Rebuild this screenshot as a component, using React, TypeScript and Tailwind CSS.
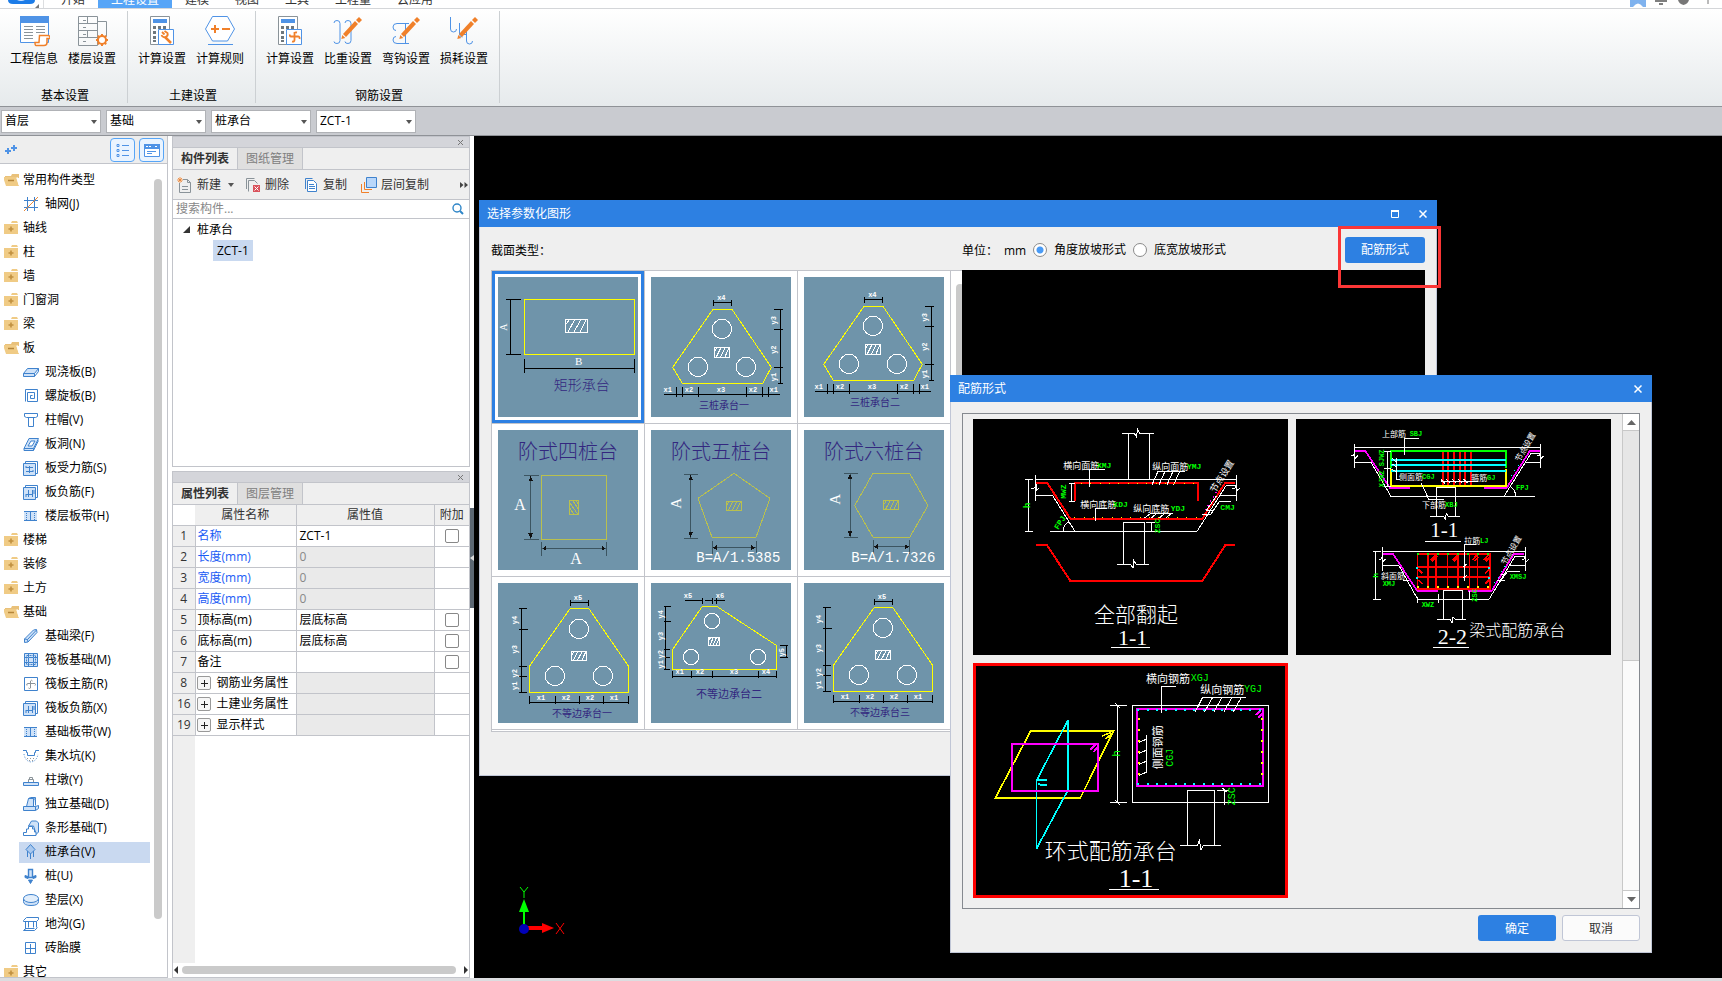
import React, { useState } from "react";

type Kids = { children?: React.ReactNode };

const FONT = "font-['Open_Sans','Noto_Sans_CJK_SC',sans-serif]";

/* ---------- drawing helpers ---------- */

function P({ d, c = "#fff", w = 3, f = "none", dash }: { d: string; c?: string; w?: number; f?: string; dash?: string }) {
  return <path d={d} stroke={c} strokeWidth={w} fill={f} strokeDasharray={dash} />;
}

type TProps = Kids & { x: number; y: number; s: number; c?: string; r?: number; a?: "start" | "middle" | "end"; f?: "mono" | "serif" | "cjk"; b?: boolean };

function T({ x, y, s, c = "#fff", r, a = "middle", f = "cjk", b, children }: TProps) {
  const family =
    f === "mono" ? '"Liberation Mono",monospace' : f === "serif" ? '"Liberation Serif",serif' : '"Noto Sans CJK SC",sans-serif';
  return (
    <text
      x={x}
      y={y}
      fill={c}
      fontSize={s}
      fontFamily={family}
      fontWeight={b ? 700 : s >= 42 ? 300 : 400}
      textAnchor={a}
      dominantBaseline="central"
      transform={r ? `rotate(${r} ${x} ${y})` : undefined}
    >
      {children}
    </text>
  );
}

function Hatch({ x, y, w, h, c = "#fff" }: { x: number; y: number; w: number; h: number; c?: string }) {
  const q = w / 4;
  return (
    <P
      c={c}
      d={`M${x} ${y}h${w}v${h}h${-w}zM${x} ${y + h / 2}l${q * 0.8} ${-h / 2}M${x + q * 0.5} ${y + h}l${q * 1.3} ${-h}M${x + q * 1.6} ${y + h}l${q * 1.3} ${-h}M${x + q * 2.7} ${y + h}l${q * 1.2} ${-h}`}
    />
  );
}

const INK = "#33277f";
const OLIVE = "#b9c04e";

function Thumb({ vb, label, children }: Kids & { vb: string; label: string }) {
  return (
    <svg viewBox={vb} className="block size-[140px] bg-[#6f94aa]" shapeRendering="crispEdges" role="img" aria-label={label}>
      {children}
    </svg>
  );
}

function Small({ items }: { items: [string, number, number, number?][] }) {
  return (
    <>
      {items.map(([t, x, y, r], i) => (
        <T key={i} x={x} y={y} s={21} f="mono" b r={r}>
          {t}
        </T>
      ))}
    </>
  );
}

function Circles({ at, r = 29 }: { at: [number, number][]; r?: number }) {
  return (
    <>
      {at.map(([x, y], i) => (
        <circle key={i} cx={x} cy={y} r={r} fill="none" stroke="#fff" strokeWidth={3} />
      ))}
    </>
  );
}

function ThreePile({ title }: { title: string }) {
  return (
    <>
      <P c="#ff0" d="M705 343H762L880 517L854 565H613L584 517Z" />
      <Circles at={[[732, 402], [660, 516], [804, 516]]} />
      <Hatch x={708} y={457} w={47} h={31} />
      <P c="#000" d="M706 323H761M706 315V332M761 315V332M908 343V565M888 343H914M888 404H914M888 517H914M900 565H914M558 598H906M595 576V606M613 576V606M661 576V606M805 576V606M854 576V606M871 576V606" />
      <Small items={[["x4", 730, 309], ["y3", 888, 376, -90], ["y2", 888, 464, -90], ["y1", 888, 546, -90], ["x1", 569, 584], ["x2", 633, 584], ["x3", 729, 584], ["x2", 825, 584], ["x1", 887, 584]]} />
      <T x={738} y={628} s={30} c={INK}>{title}</T>
    </>
  );
}

function Unequal({ title, tx }: { title: string; tx: number }) {
  return (
    <>
      <P c="#ff0" d="M277 565H332L452 739V817H154V739Z" />
      <Circles at={[[303, 627], [231, 768], [375, 768]]} />
      <Hatch x={280} y={693} w={46} h={28} />
      <P c="#000" d="M277 548H332M277 540V557M332 540V557M130 565V817M123 565H147M123 628H150M123 739H147M123 769H147M123 817H147M154 847H452M154 828V852M232 828V852M304 828V852M376 828V852M452 828V852" />
      <Small items={[["x5", 300, 533], ["y4", 110, 600, -90], ["y3", 110, 688, -90], ["y2", 110, 760, -90], ["y1", 110, 797, -90], ["x1", 189, 833], ["x2", 264, 833], ["x2", 336, 833], ["x1", 408, 833]]} />
      <T x={tx} y={877} s={30} c={INK}>{title}</T>
    </>
  );
}

const ARROW_L = "l12 -7v14z";
const ARROW_R = "l-12 -7v14z";
const ARROW_U = "l-7 16h14z";
const ARROW_D = "l-7 -16h14z";

const thumbs: { name: string; art: React.ReactNode }[] = [
  {
    name: "矩形承台",
    art: (
      <Thumb vb="60 246 420 420" label="矩形承台">
        <P c="#ff0" d="M139 313H470V478H139Z" />
        <Hatch x={261} y={373} w={66} h={39} />
        <P c="#000" d="M97 313V478M84 313H129M84 478H129M139 520H470M139 492V533M470 492V533" />
        <T x={302} y={498} s={33} f="serif">B</T>
        <T x={76} y={396} s={30} f="serif" r={-90}>A</T>
        <T x={311} y={568} s={42} c={INK}>矩形承台</T>
      </Thumb>
    ),
  },
  { name: "三桩承台一", art: <Thumb vb="519 246 420 420" label="三桩承台一"><ThreePile title="三桩承台一" /></Thumb> },
  {
    name: "三桩承台二",
    art: (
      <Thumb vb="519 246 420 420" label="三桩承台二">
        <g transform="translate(-6 -9)"><ThreePile title="三桩承台二" /></g>
      </Thumb>
    ),
  },
  {
    name: "阶式四桩台",
    art: (
      <Thumb vb="60 30 420 420" label="阶式四桩台">
        <T x={270} y={92} s={60} c={INK}>阶式四桩台</T>
        <P c={OLIVE} d="M191 166H385V358H191Z" />
        <P c={OLIVE} d="M274 241H302V284H274ZM274 262L288 284M274 246L300 284M284 241L302 268M294 241L302 254" />
        <P c="#3c5561" d="M158 166V358M139 166H182M139 358H182M191 385H385M191 367V409M385 367V409" />
        <path fill="#111" d={`M158 168${ARROW_U}M158 356${ARROW_D}M193 385${ARROW_L}M383 385${ARROW_R}`} />
        <T x={126} y={254} s={48} f="serif">A</T>
        <T x={294} y={416} s={48} f="serif">A</T>
      </Thumb>
    ),
  },
  {
    name: "阶式五桩台",
    art: (
      <Thumb vb="519 30 420 420" label="阶式五桩台">
        <T x={729} y={92} s={60} c={INK}>阶式五桩台</T>
        <P c={OLIVE} d="M768 160L876 235L834 352H702L660 235Z" />
        <Hatch x={745} y={243} w={45} h={28} c={OLIVE} />
        <P c="#3c5561" d="M638 163V354M618 163H661M618 354H661M702 383H834M702 362V404M834 362V404" />
        <path fill="#111" d={`M638 165${ARROW_U}M638 352${ARROW_D}M704 383${ARROW_L}M832 383${ARROW_R}`} />
        <T x={594} y={250} s={45} f="serif" r={-90}>A</T>
        <T x={907} y={415} s={42} f="mono" a="end">B=A/1.5385</T>
      </Thumb>
    ),
  },
  {
    name: "阶式六桩台",
    art: (
      <Thumb vb="978 30 420 420" label="阶式六桩台">
        <T x={1188} y={92} s={60} c={INK}>阶式六桩台</T>
        <P c={OLIVE} d="M1185 160H1295L1350 257L1295 352H1185L1130 257Z" />
        <Hatch x={1217} y={241} w={45} h={27} c={OLIVE} />
        <P c="#3c5561" d="M1116 160V352M1097 160H1140M1097 352H1140M1185 380H1295M1185 361V403M1295 361V403" />
        <path fill="#111" d={`M1116 162${ARROW_U}M1116 350${ARROW_D}M1187 380${ARROW_L}M1293 380${ARROW_R}`} />
        <T x={1070} y={238} s={45} f="serif" r={-90}>A</T>
        <T x={1372} y={415} s={42} f="mono" a="end">B=A/1.7326</T>
      </Thumb>
    ),
  },
  { name: "不等边承台一", art: <Thumb vb="60 489 420 420" label="不等边承台一"><Unequal title="不等边承台一" tx={312} /></Thumb> },
  {
    name: "不等边承台二",
    art: (
      <Thumb vb="519 489 420 420" label="不等边承台二">
        <P c="#ff0" d="M673 559H716L895 676V748H584V688Z" />
        <Circles r={23} at={[[702, 603], [639, 711], [840, 711]]} />
        <Hatch x={691} y={652} w={34} h={25} />
        <P c="#000" d="M621 541H675M680 541H703M708 541H741M673 533V551M703 533V551M716 533V551M562 559V748M557 559H579M557 604H579M557 688H575M557 712H575M557 748H575M584 769H895M584 752V773M640 752V773M703 752V773M841 752V773M895 752V773M925 676V712M906 676H930M906 712H930" />
        <Small items={[["x5", 630, 528], ["x6", 726, 528], ["y4", 549, 583, -90], ["y3", 549, 648, -90], ["y2", 549, 703, -90], ["y1", 549, 733, -90], ["x1", 605, 757], ["x2", 666, 757], ["x3", 768, 757], ["x4", 864, 757], ["y5", 911, 697, -90]]} />
        <T x={753} y={819} s={33} c={INK}>不等边承台二</T>
      </Thumb>
    ),
  },
  {
    name: "不等边承台三",
    art: (
      <Thumb vb="60 489 420 420" label="不等边承台三">
        <g transform="translate(-6 -3)"><Unequal title="不等边承台三" tx={294} /></g>
      </Thumb>
    ),
  },
];

const GREEN = "#0f0";
const CYAN = "#0ff";
const MAG = "#f0f";

function FlipUpSection() {
  return (
    <svg viewBox="69 57 945 708" className="block h-[236px] w-[315px] bg-black" shapeRendering="crispEdges" role="img" aria-label="全部翻起">
      <P w={6} c="#f00" d="M258 248H291L361 356H757L826 248H855M375 302V248H745V302M258 435H291L361 543H757L826 435H855" />
      <P d="M516 100H553L559 110L563 88L569 100H612M535 100V238M599 100V238M257 238H860M257 225V302M257 287H308L375 394M244 265H252L258 256V272L267 265M301 394H741L828 257H860M808 287H860M860 225V302M846 265H854L860 256V272L869 265M236 238V394M226 238H248M226 394H248" />
      <P d="M418 260V208H466M606 254L624 214H706M627 254L645 214M651 254L669 214M671 254L689 214M365 250V304M356 250H374M356 304H374M436 362V325H470M584 354L602 340H668M604 354L620 340M628 354L644 340M648 354L664 340M520 492V367H584V492M501 493H542L549 504L551 480L558 493H597M604 367V394M588 367H614M340 392Q340 374 357 366M843 304H808L782 344M757 344H782M768 330H790M800 287L770 330" />
      <P c="#ff0" dash="3 25" d="M393 250H740M373 353H745" />
      <P c={MAG} dash="3 12" d="M765 330L800 275" w={4} />
      <T x={340} y={196} s={27} a="start">横向面筋</T>
      <T x={441} y={197} s={24} a="start" f="mono" b c={GREEN}>XMJ</T>
      <T x={607} y={198} s={27} a="start">纵向面筋</T>
      <T x={711} y={199} s={24} a="start" f="mono" b c={GREEN}>YMJ</T>
      <T x={391} y={312} s={27} a="start">横向底筋</T>
      <T x={490} y={314} s={24} a="start" f="mono" b c={GREEN}>XDJ</T>
      <T x={550} y={324} s={27} a="start">纵向底筋</T>
      <T x={662} y={325} s={24} a="start" f="mono" b c={GREEN}>YDJ</T>
      <T x={811} y={322} s={24} a="start" f="mono" b c={GREEN}>CMJ</T>
      <T x={342} y={275} s={24} r={-90} f="mono" b c={GREEN}>MWZ</T>
      <T x={621} y={378} s={24} r={-90} f="mono" b c={GREEN}>ZSC</T>
      <T x={330} y={368} s={24} r={-58} f="mono" b c={GREEN}>FPJ</T>
      <T x={235} y={316} s={27} r={-90} f="mono" b c={GREEN}>h</T>
      <T x={815} y={228} s={27} r={-58}>节点设置</T>
      <T x={558} y={638} s={63}>全部翻起</T>
      <T x={548} y={711} s={66} f="serif">1-1</T>
      <P d="M483 742H600" />
    </svg>
  );
}

function BeamSection() {
  return (
    <svg viewBox="33 57 945 708" className="block h-[236px] w-[315px] bg-black" shapeRendering="crispEdges" role="img" aria-label="梁式配筋承台">
      <P d="M209 142H767M209 132V205M767 132V205M209 187H258L318 289H750M657 289L738 160H767M724 187H767M198 167H204L209 158V176L218 167M756 167H762L767 158V176L778 167" />
      <P w={5} c={MAG} d="M209 152H240L315 264H375M764 152H735L665 264H598" />
      <P w={5} c="#f00" d="M474 154V258M489 154V258M507 154V258M525 154V258M540 154V258M558 154V258" />
      <P w={5} c={GREEN} d="M318 205V153H663V205" />
      <P w={5} c="#ff0" d="M318 207V258H663V207" />
      <P w={5} c={CYAN} d="M318 180H663M318 195H663M318 213H663" />
      <P c={CYAN} dash="3 16" d="M678 228L720 165" w={4} />
      <P d="M359 165V115H402M334 175V238H345M322 175L334 187M322 192L334 200M322 208L334 216M468 244H580M468 238L480 250M484 238L496 250M502 238L514 250M520 238L532 250M536 238L548 250M409 250L431 297H476M308 154V260M298 154H318M298 206H318M298 260H318M455 348V262H512V348M435 349H475L481 358L484 340L490 349H525M675 258Q692 270 692 289" />
      <T x={291} y={101} s={24} a="start">上部筋</T>
      <T x={374} y={102} s={21} a="start" f="mono" b c={GREEN}>SBJ</T>
      <T x={342} y={230} s={24} a="start">侧面筋</T>
      <T x={411} y={231} s={21} a="start" f="mono" b c={GREEN}>CGJ</T>
      <T x={559} y={232} s={24} a="start">箍筋</T>
      <T x={606} y={234} s={21} a="start" f="mono" b c={GREEN}>GJ</T>
      <T x={411} y={314} s={24} a="start">下部筋</T>
      <T x={480} y={315} s={21} a="start" f="mono" b c={GREEN}>XBJ</T>
      <T x={693} y={264} s={21} a="start" f="mono" b c={GREEN}>FPJ</T>
      <T x={290} y={205} s={21} r={-90} f="mono" b c={GREEN}>XJWZ SJWZ</T>
      <T x={719} y={140} s={24} r={-60}>节点设置</T>
      <T x={478} y={391} s={63} f="serif">1-1</T>
      <P d="M420 424H528" />

      <P d="M293 454H722M293 441V514M722 441V514M293 497H342L398 598H612L690 469H722M676 497H722M282 477H288L293 468V486L302 477M711 477H717L722 468V486L732 477M272 454V598M263 454H288M263 598H288" />
      <P w={5} c={MAG} d="M293 462H324L397 573H459M718 462H686L620 573H549" />
      <P w={5} c="#f00" d="M397 462H614V567H397ZM428 462V567M452 462V567M487 462V567M518 462V567M553 462V567M577 462V567M397 501H614M397 531H614" />
      <P w={5} c="#f00" d="M436 480L452 464M440 484L456 468M502 480L518 464M506 484L516 474M562 480L577 464M568 484L580 472M597 480L612 464M602 484L612 474M400 508L412 520M400 540L412 552M600 520L612 508M600 552L612 540" />
      <P w={6} c={GREEN} dash="6 24" d="M395 463H616" />
      <P w={6} c="#ff0" dash="6 24" d="M395 562H616" />
      <P w={6} c={CYAN} dash="6 24" d="M397 500V540M612 500V540" />
      <P c={CYAN} dash="3 16" d="M628 548L666 490" w={4} />
      <P d="M539 542V433H573M534 500L546 492M534 534L546 526M355 540H372M397 598H461M397 590V608M461 582V608M554 572V598M476 657V572H533V657M456 658H495L501 668L504 650L510 658H543M705 514H668L640 552M635 540H660M648 524H664" />
      <T x={538} y={422} s={24} a="start">拉筋</T>
      <T x={585} y={423} s={21} a="start" f="mono" b c={GREEN}>LJ</T>
      <T x={288} y={527} s={24} a="start">斜面筋</T>
      <T x={293} y={551} s={21} a="start" f="mono" b c={GREEN}>XMJ</T>
      <T x={674} y={530} s={21} a="start" f="mono" b c={GREEN}>XMSJ</T>
      <T x={410} y={614} s={21} a="start" f="mono" b c={GREEN}>XWZ</T>
      <T x={569} y={586} s={21} r={-90} f="mono" b c={GREEN}>ZSC</T>
      <T x={271} y={526} s={24} r={-90} f="mono" b c={GREEN}>h</T>
      <T x={677} y={450} s={24} r={-60}>节点设置</T>
      <T x={502} y={710} s={66} f="serif">2-2</T>
      <P d="M444 742H552" />
      <T x={553} y={687} s={48} a="start">梁式配筋承台</T>
    </svg>
  );
}

function RingSection() {
  return (
    <svg viewBox="78 33 927 687" className="block h-[229px] w-[309px] bg-black" shapeRendering="crispEdges" role="img" aria-label="环式配筋承台">
      <P w={5} c="#ff0" d="M242 228H490L391 429H136ZM456 243L484 232M466 252L486 236" />
      <P w={5} c={CYAN} d="M354 195V405L259 582V378ZM259 375H291M264 386L270 389H291" />
      <P w={6} c={MAG} d="M186 266H445V408H186ZM421 284L436 268M430 292L444 276" />
      <P d="M547 151H956V442H547Z" />
      <P w={6} c={MAG} d="M561 162H940V393H561ZM916 180L934 166M926 188L940 172" />
      <P w={6} c={CYAN} dash="6 22" d="M562 166H938M562 388H938" />
      <P w={6} c="#ff0" dash="6 27" d="M566 190V370M935 190V370" />
      <P d="M634 173V94H678M736 170L758 127H888M764 170L788 127M792 170L816 127M822 170L846 127M850 170L874 127M502 151V442M480 151H530M480 442H530M494 143L510 159M494 434L510 450M590 240V351M568 262L590 252M568 295L590 285M568 328L590 318M568 361L590 351M713 571V406H794V571M691 571H742L748 556L753 586L760 571H813M824 406V450M801 406H838M818 400L830 412" />
      <T x={588} y={69} s={33} a="start">横向钢筋</T>
      <T x={722} y={71} s={30} a="start" f="mono" c={GREEN}>XGJ</T>
      <T x={751} y={102} s={33} a="start">纵向钢筋</T>
      <T x={882} y={104} s={30} a="start" f="mono" c={GREEN}>YGJ</T>
      <T x={502} y={295} s={33} r={-90} f="mono" c={GREEN}>h</T>
      <T x={620} y={277} s={33} r={-90}>侧面钢筋</T>
      <T x={663} y={308} s={30} r={-90} f="mono" c={GREEN}>CGJ</T>
      <T x={849} y={424} s={30} r={-90} f="mono" c={GREEN}>ZSC</T>
      <T x={284} y={583} s={66} a="start">环式配筋承台</T>
      <T x={558} y={671} s={78} f="serif">1-1</T>
      <P d="M477 703H627" />
    </svg>
  );
}

/* ---------- ribbon ---------- */

const B = "#4f93e6";
const G = "#8a9399";
const O = "#f0802a";

function RibbonSvg({ children }: Kids) {
  return (
    <svg viewBox="0 0 32 32" className="block size-8" fill="none" aria-hidden="true">
      {children}
    </svg>
  );
}

function CalcBase() {
  return (
    <>
      <path d="M4.500 1.500h19v28h-19z" stroke={G} fill="#fff" />
      <path d="M7 4h14v4H7z" fill={B} />
      <path d="M7 11h3v3H7zM12 11h3v3h-3zM17 11h3v3h-3zM7 16h3v3H7zM12 16h3v3h-3zM7 21h3v3H7zM7 25h3v2H7z" fill="#6e777d" />
      <path d="M12.500 14.500h15v15h-15z" stroke={B} fill="#fff" />
    </>
  );
}

function Pencil() {
  return (
    <>
      <path d="M11 19l12-13 3 3-12 13z" fill={O} />
      <path d="M24 5l3-3 3 3-3 3z" fill={O} />
      <path d="M10.300 20l3 3-4 1z" fill={O} />
    </>
  );
}

const ribbonIcons: Record<string, React.ReactNode> = {
  info: (
    <RibbonSvg>
      <path d="M2.500 1.500h28v26h-28z" stroke={B} fill="#fff" />
      <path d="M2 1h29v7H2z" fill={B} />
      <path d="M6 11.500h9M6 14.500h9M6 17.500h9M6 20.500h9M6 23.500h9M18 11.500h9M18 14.500h9M18 17.500h9" stroke={G} />
      <path d="M21.500 20.500h8.500a2 2 0 0 1 2 2v1h-3v4q0 3-3 3h-8q-1 0-1-3h4z" stroke={O} strokeWidth="1.500" fill="#fff" />
    </RibbonSvg>
  ),
  floor: (
    <RibbonSvg>
      <path d="M2.500 1.500h19v29h-19zM2.500 8.500h19M2.500 15.500h19M2.500 22.500h19M11.500 1.500v7M11.500 15.500v7M7 5.500h3M7 12.500h3M7 19.500h3M7 26.500h3M21.500 6.500h9v15" stroke={G} />
      <circle cx="26" cy="25" r="4" stroke={O} strokeWidth="2" fill="#fff" />
      <path d="M26 19v2M26 29v2M20 25h2M30 25h2M21.800 20.800l1.400 1.400M28.800 27.800l1.400 1.400M21.800 29.200l1.400-1.400M28.800 22.200l1.400-1.400" stroke={O} strokeWidth="2" />
    </RibbonSvg>
  ),
  calcTool: (
    <RibbonSvg>
      <CalcBase />
      <path d="M19 22l6 6" stroke={O} strokeWidth="2.500" />
      <path d="M16 17l2.500 2.500M15.500 20q1 3 4 2t2-4l-3-2" stroke={O} strokeWidth="1.800" />
    </RibbonSvg>
  ),
  rule: (
    <RibbonSvg>
      <path d="M8.500 1.500h15l7 12.500-7 12h-15l-7-12z" stroke={B} fill="#fff" />
      <path d="M7 14h8M11 10v8M18 14h8" stroke={O} strokeWidth="2" />
      <path d="M4 29.500h25" stroke={B} />
    </RibbonSvg>
  ),
  calcRebar: (
    <RibbonSvg>
      <CalcBase />
      <path d="M20.500 17v8q0 2-2.500 1.500M20.500 18.500q0-1.500 2.500-1M16 21.500h8q2 0 1.500 2.500M17 21.500q-1.500 0-1-2" stroke={O} strokeWidth="1.800" />
    </RibbonSvg>
  ),
  weight: (
    <RibbonSvg>
      <path d="M2 8q0-2.500 3-2.500t3 3v17q0 3-3 3t-3-2M13 8q0-2.500 3-2.500t3 3v17q0 3-3 3t-3-2" stroke={B} />
      <Pencil />
    </RibbonSvg>
  ),
  hook: (
    <RibbonSvg>
      <path d="M19 8.500H7q-4 0-4 3.500t3 3.500M19 28.500H7q-4 0-4-3.500t3-3.500M15.500 8.500v20M12 8.500h7" stroke={B} />
      <Pencil />
    </RibbonSvg>
  ),
  loss: (
    <RibbonSvg>
      <path d="M2.500 2v12q0 3 3 3t3-3M11.500 8v11q0 3 3 3M18.500 16v10q0 3 3 3t3-3M14 19.500h5" stroke={B} />
      <Pencil />
    </RibbonSvg>
  ),
};

const ribbonGroups = [
  { title: "基本设置", items: [["info", "工程信息"], ["floor", "楼层设置"]] },
  { title: "土建设置", items: [["calcTool", "计算设置"], ["rule", "计算规则"]] },
  { title: "钢筋设置", items: [["calcRebar", "计算设置"], ["weight", "比重设置"], ["hook", "弯钩设置"], ["loss", "损耗设置"]] },
];

const menuTabs = ["开始", "工程设置", "建模", "视图", "工具", "工程量", "云应用"];

function TopBar() {
  return (
    <header className="shrink-0">
      <div className="flex h-[9px] items-end overflow-hidden border-b border-[#d4d6d9] bg-white">
        <div className="h-2 w-11 shrink-0 border-r border-[#dcdee0] pl-2">
          <svg viewBox="0 0 34 8" className="block h-2 w-[34px]" aria-hidden="true">
            <path d="M0 0h27q0 4-5 4H5q-5 0-5-4z" fill="#1c7ce8" />
            <path d="M9 0q4 2 8 0z" fill="#cfe4ff" />
            <path d="M31 4v4h-4z" fill="#777" />
          </svg>
        </div>
        <nav className="ml-1 flex">
          {menuTabs.map((t, i) => (
            <button
              key={t}
              className={i === 1 ? "h-4 bg-[#57a5f7] px-[13px] text-xs leading-4 text-white" : "h-4 px-[13px] text-xs leading-4 text-[#333]"}
            >
              {t}
            </button>
          ))}
        </nav>
        <svg viewBox="0 0 84 8" className="mr-2 ml-auto h-2 w-[84px]" aria-hidden="true">
          <path d="M0 0h16v7H0z" fill="#7fb2ee" />
          <path d="M3 7q5-7 10 0z" fill="#fff" />
          <path d="M25 1h12M29 4h4" stroke="#555" strokeWidth="1.500" />
          <path d="M48 0h11q-1 4-5.500 5-4.500-1-5.500-5z" fill="#777" />
          <path d="M78 0v4" stroke="#777" />
        </svg>
      </div>
      <div className="flex h-[98px] border-b border-[#8f9297] bg-linear-to-b from-white to-[#e6eaec] pt-[2px]">
        {ribbonGroups.map((g) => (
          <section key={g.title} className="mb-[3px] flex flex-col justify-between border-r border-[#ccd0d3] pr-[6px] pl-[5px]">
            <div className="flex pt-1">
              {g.items.map(([icon, label]) => (
                <button key={label} className="flex w-[58px] flex-col items-center gap-1 text-xs leading-4 text-black">
                  {ribbonIcons[icon]}
                  {label}
                </button>
              ))}
            </div>
            <h2 className="pl-1 text-center text-xs leading-[14px] text-black">{g.title}</h2>
          </section>
        ))}
      </div>
      <div className="flex h-[29px] items-center gap-[5px] border-b border-[#8f9297] bg-[#c9cbd0] px-px">
        {[["楼层", "首层"], ["构件大类", "基础"], ["构件类型", "桩承台"], ["构件", "ZCT-1"]].map(([name, v]) => (
          <label key={name} className="relative">
            <select aria-label={name} className="block h-[23px] w-[100px] appearance-none border border-[#b0b2b6] bg-white pl-[3px] text-xs text-black">
              <option>{v}</option>
            </select>
            <svg viewBox="0 0 6 4" className="pointer-events-none absolute top-[10px] right-1 h-1 w-[6px]" aria-hidden="true">
              <path d="M0 0h6L3 4z" fill="#555" />
            </svg>
          </label>
        ))}
      </div>
    </header>
  );
}

/* ---------- component tree ---------- */

const S = "#3f82cd";
const L = "#cfe2f8";

const treeIcons: Record<string, React.ReactNode> = {
  axis: (<><path d="M4.500 1v14M11.500 1v14M1 4.500h14M1 11.500h14" stroke={S} /><path d="M1 15L15 1" stroke="#e98a3c" /></>),
  slab: (<path d="M.5 9.500l4-5h11l-4 5zM.500 9.500v3h11v-3M11.500 12.500l4-5v-3" stroke={S} fill={L} />),
  spiral: (<path d="M2.500 13.500v-12h12v12h-10V4.500h7v6h-4v-3h2" stroke={S} />),
  cap: (<path d="M1.500 1.500h13v3l-2 1h-9l-2-1zM5.500 5.500h5v9h-5z" stroke={S} />),
  hole: (<><path d="M1 12.500L6 2.500h9.500l-5 10zM1 12.500v2h9.500v-2M10.500 14.500l5-10" stroke={S} fill={L} /><path d="M5 10l3-5h4l-3 5z" stroke={S} fill="#fff" /></>),
  rebar: (<><path d="M.5 3.500h12v12H.5z" fill={L} stroke={S} /><path d="M2.500 3.500v-2h12v12h-2M3 7.500h7M3 11.500h7M6.500 6v7M3 6v2M10 10v2" stroke={S} /></>),
  negRebar: (<><path d="M.5 3.500h12v12H.5z" fill={L} stroke={S} /><path d="M2.500 3.500v-2h12v12h-2M5.500 6v7M9.500 6v7M3 10.500h7M3 10v3M11 6v4" stroke={S} /></>),
  band: (<><path d="M1 3h13v10H1z" fill={L} /><path d="M1 3.500h13M1 12.500h13M7.500 3v10" stroke={S} /><path d="M3.500 5v7M11.500 5v7" stroke={S} strokeDasharray="1 1" /></>),
  beam: (<path d="M1.500 11l9-9 3-.500.500 3-9 9.500-3.500.500zM1.500 11l3 .500.500 2.500M4.500 11.500l9-9.500" stroke={S} fill={L} />),
  raft: (<><path d="M1.500 1.500h13v13h-13zM5.500 5.500h5v5h-5z" stroke={S} fill={L} /><path d="M3.500 3.500h9v9h-9z" stroke={S} strokeDasharray="2 1" /><path d="M5.500 1v4M10.500 1v4M5.500 11v4M10.500 11v4M1 5.500h4M1 10.500h4M11 5.500h4M11 10.500h4" stroke={S} /></>),
  mainRebar: (<><path d="M1.500 1.500h13v13h-13z" stroke={S} /><path d="M7.500 12V5q1-1.500 2 0M4 9.500q-1-2 1-2h7q1 1 0 2M7.500 12q-1 1-2 0" stroke="#8a9399" /></>),
  pit: (<><path d="M0 2.500h3.500v2h1v3h7v-3h1v-2H16" stroke={S} /><path d="M1 6q1 7 7 8 6-1 7-8" stroke={S} strokeDasharray="1 1.500" /><path d="M4 10.500h8M6 12.500h4" stroke="#999" strokeDasharray="1 2" /></>),
  pier: (<><path d="M.500 10.500h15v3H.500z" stroke={S} fill={L} /><path d="M5.500 10V7.500h5V10M6.500 7V5.500h3V7" stroke="#8a9399" /></>),
  isolated: (<path d="M3.500 10.500l2-8h5v8M10.500 2.500l2 1v6M.500 10.500h12v4H.500zM12.500 10.500l3-1v3l-3 2M5.500 2.500l2-1h5v2" stroke={S} fill={L} />),
  strip: (<><path d="M5.500 6l3-5h5l2 2v9l-3 3V12L10.500 6z" stroke={S} fill={L} /><path d="M.500 15.500v-3h3V9h2V6.500h4V9h2v3h1.500v3.500z" stroke={S} fill="#fff" /></>),
  pileCap: (<><path d="M4.500 7v6M7.500 9v6M10.500 7v6" stroke={S} /><path d="M7.500 .5l4.500 5-4.500 4.500L3 5.500z" stroke={S} fill="#a9c8ee" /></>),
  pile: (<><path d="M5.500 1.500h4v8h-4z" stroke={S} fill={L} strokeWidth="1.400" /><path d="M5.500 12h4l-2 3.500zM2 7.500l3 1v2l-3-1zM13 7.500l-3 1v2l3-1z" stroke={S} fill={S} /></>),
  cushion: (<><path d="M.500 6.500v3q0 4 7.500 4t7.500-4v-3" stroke={S} fill={L} /><ellipse cx="8" cy="6.500" rx="7.500" ry="4" stroke={S} fill="#e2eefb" /></>),
  trench: (<path d="M.500 4.500l3-3h12v2l-2 2H.500zM2.500 5.500v8M5.500 5.500v6M10.500 5.500v6M13.500 5.500v6M.500 14.500h11l3-3M.500 14.500l2-2h9" stroke={S} />),
  brick: (<path d="M2.500 2.500h10v11h-10zM2.500 8.500h10M7.500 4v9M5 8.500h6" stroke={S} />),
};

function FolderIcon({ open }: { open: boolean }) {
  return (
    <svg viewBox="0 0 16 16" className="size-4 shrink-0" aria-hidden="true">
      {open ? (
        <>
          <path d="M1 4h6l1-2h7v4H1z" fill="#e9c17a" />
          <path d="M-1 5h13l3 9H2z" fill="#f0cb85" />
          <path d="M4 8.500h6" stroke="#b5853a" strokeWidth="1.500" />
          <path d="M13 5l2 8" stroke="#fff" />
        </>
      ) : (
        <>
          <path d="M0 4h14v10H0zM8 1h5l1 2H7z" fill="#f0cb85" />
          <path d="M7 6.500v5M4.500 9h5" stroke="#c0903f" strokeWidth="1.600" />
        </>
      )}
    </svg>
  );
}

const tree: { name: string; open?: boolean; kids?: [string, string][] }[] = [
  { name: "常用构件类型", open: true, kids: [["axis", "轴网(J)"]] },
  { name: "轴线" },
  { name: "柱" },
  { name: "墙" },
  { name: "门窗洞" },
  { name: "梁" },
  { name: "板", open: true, kids: [["slab", "现浇板(B)"], ["spiral", "螺旋板(B)"], ["cap", "柱帽(V)"], ["hole", "板洞(N)"], ["rebar", "板受力筋(S)"], ["negRebar", "板负筋(F)"], ["band", "楼层板带(H)"]] },
  { name: "楼梯" },
  { name: "装修" },
  { name: "土方" },
  {
    name: "基础",
    open: true,
    kids: [["beam", "基础梁(F)"], ["raft", "筏板基础(M)"], ["mainRebar", "筏板主筋(R)"], ["negRebar", "筏板负筋(X)"], ["band", "基础板带(W)"], ["pit", "集水坑(K)"], ["pier", "柱墩(Y)"], ["isolated", "独立基础(D)"], ["strip", "条形基础(T)"], ["pileCap", "桩承台(V)"], ["pile", "桩(U)"], ["cushion", "垫层(X)"], ["trench", "地沟(G)"], ["brick", "砖胎膜"]],
  },
  { name: "其它" },
];

function Sidebar() {
  const [active, setActive] = useState("桩承台(V)");
  return (
    <aside className="flex w-[168px] shrink-0 flex-col overflow-hidden border-r border-b border-[#c2c4ca] bg-white">
      <div className="flex h-7 shrink-0 items-center gap-1 border-b border-[#c2c4ca] bg-[#eee] pr-[3px] pl-1">
        <svg viewBox="0 0 14 12" className="mr-auto h-3 w-[14px]" stroke={B} strokeWidth="2" aria-hidden="true">
          <path d="M4 4v6M1 7h6M10 1v6M7 4h6" />
        </svg>
        <button aria-label="列表视图" className="flex h-6 w-[25px] items-center justify-center rounded border border-[#57a5f7] bg-[#eaf4ff]">
          <svg viewBox="0 0 14 14" className="size-[14px]" stroke={B} fill="none" aria-hidden="true">
            <path d="M1 1.500h2v2H1zM1 6.500h2v2H1zM1 11.500h2v2H1zM6 2.500h7M6 7.500h7M6 12.500h7" />
          </svg>
        </button>
        <button aria-label="窗口视图" className="flex h-6 w-[25px] items-center justify-center rounded border border-[#57a5f7] bg-[#eaf4ff]">
          <svg viewBox="0 0 16 14" className="h-[14px] w-4" fill="none" aria-hidden="true">
            <path d="M.5 1.500h15v12H.5z" stroke={B} fill="#fff" />
            <path d="M0 1h16v5H0z" fill={B} />
            <path d="M2 3.500h6M11 3.500h2" stroke="#fff" strokeDasharray="2 1" />
            <path d="M3 8.500h9M3 10.500h5" stroke={B} />
          </svg>
        </button>
      </div>
      <div className="flex min-h-0 flex-1">
        <ul className="min-w-0 flex-1 overflow-hidden pt-1">
          {tree.map((n) => (
            <li key={n.name}>
              <button className="flex h-6 items-center gap-[3px] pl-1 text-xs text-black">
                <FolderIcon open={!!n.open} />
                {n.name}
              </button>
              {n.kids && (
                <ul>
                  {n.kids.map(([icon, name]) => (
                    <li key={name} className="flex h-6 items-center pl-[19px]">
                      <button
                        onClick={() => setActive(name)}
                        className={active === name ? "flex h-[21px] flex-1 items-center gap-[6px] bg-[#c9d9f0] pl-1 text-xs text-black" : "flex h-[21px] flex-1 items-center gap-[6px] pl-1 text-xs text-black"}
                      >
                        <svg viewBox="0 0 16 16" className="size-4 shrink-0" fill="none" aria-hidden="true">{treeIcons[icon]}</svg>
                        {name}
                      </button>
                    </li>
                  ))}
                </ul>
              )}
            </li>
          ))}
        </ul>
        <div className="w-[17px] shrink-0 px-1 pt-[15px] pb-[58px]">
          <div className="h-full w-2 rounded-full bg-[#cacaca]" />
        </div>
      </div>
    </aside>
  );
}

/* ---------- middle panels ---------- */

function PanelHead({ tabs }: { tabs: [string, string] }) {
  return (
    <>
      <div className="flex h-[11px] shrink-0 items-center justify-end border-b border-[#c2c4ca] bg-[#d4d5da] pr-[5px]">
        <button aria-label="关闭" className="block">
          <svg viewBox="0 0 7 7" className="block size-[7px]" stroke="#777" aria-hidden="true"><path d="M1 1l5 5M6 1L1 6" /></svg>
        </button>
      </div>
      <div className="flex h-[22px] shrink-0 border-b border-[#c2c4ca] bg-[#efefef] text-xs">
        <button className="w-[65px] border-r border-[#c2c4ca] font-bold text-[#333]">{tabs[0]}</button>
        <button className="w-[65px] border-r border-[#c2c4ca] bg-[#dfdfdf] text-[#808080]">{tabs[1]}</button>
      </div>
    </>
  );
}

function ToolButton({ label, children }: Kids & { label: string }) {
  return (
    <button className="flex items-center gap-1 text-xs text-[#333]">
      <svg viewBox="0 0 16 16" className="size-4" fill="none" aria-hidden="true">{children}</svg>
      {label}
    </button>
  );
}

function ComponentPanel() {
  return (
    <section className="flex h-[331px] shrink-0 flex-col border border-[#c2c4ca] bg-white">
      <PanelHead tabs={["构件列表", "图纸管理"]} />
      <div className="flex h-[30px] shrink-0 items-center border-b border-[#c2c4ca] bg-[#efefef] pl-1">
        <ToolButton label="新建">
          <path d="M2.500 6v9.500h11V5.500l-3-3H6M10.500 2.500v3h3M5 9.500h6M5 12.500h6" stroke={G} />
          <path d="M3 0v6M0 3h6M1 1l4 4M5 1L1 5" stroke={O} strokeWidth=".8" />
        </ToolButton>
        <svg viewBox="0 0 6 4" className="mr-[11px] ml-[7px] h-1 w-[6px]" aria-hidden="true"><path d="M0 0h6L3 4z" fill="#555" /></svg>
        <ToolButton label="删除">
          <path d="M1.500 12V1.500h8M3.500 14.500v-11h6l3 3" stroke={G} />
          <path d="M8 8h7v7H8z" fill="#d9525c" />
          <path d="M9.500 9.500l4 4M13.500 9.500l-4 4" stroke="#fff" />
        </ToolButton>
        <span className="w-[14px]" />
        <ToolButton label="复制">
          <path d="M2.500 12V1.500h7" stroke={S} />
          <path d="M4.500 3.500h6l3 3v8h-9z" stroke={S} fill="#fff" />
          <path d="M6 7.500h5M6 9.500h6M6 11.500h6" stroke={S} />
        </ToolButton>
        <span className="w-[14px]" />
        <ToolButton label="层间复制">
          <path d="M5.500 .5h10v10h-10z" stroke={S} fill="#b9d7fa" />
          <path d="M3.500 5v7.500H11M.5 7v8.500H8" stroke={O} />
        </ToolButton>
        <button aria-label="更多" className="mr-px ml-auto">
          <svg viewBox="0 0 8 6" className="block h-[6px] w-2" aria-hidden="true"><path d="M0 0l3.500 3L0 6zM4.500 0L8 3 4.500 6z" fill="#444" /></svg>
        </button>
      </div>
      <label className="flex h-[19px] shrink-0 items-center border-b border-[#c2c4ca] pr-[5px] pl-[3px]">
        <input type="text" aria-label="搜索构件" placeholder="搜索构件..." className="min-w-0 flex-1 text-xs leading-4 outline-none placeholder:text-[#888]" />
        <svg viewBox="0 0 12 12" className="size-3" fill="none" stroke="#2f86c8" aria-hidden="true"><circle cx="5" cy="5" r="4" strokeWidth="1.400" /><path d="M8 8l3 3" strokeWidth="2" /></svg>
      </label>
      <ul className="text-xs text-black">
        <li>
          <button className="flex h-[21px] items-center gap-[7px] pl-[10px]">
            <svg viewBox="0 0 7 7" className="size-[7px]" aria-hidden="true"><path d="M7 0v7H0z" fill="#333" /></svg>
            桩承台
          </button>
          <button className="ml-10 flex h-[21px] items-center bg-[#c9d9f0] px-1">ZCT-1</button>
        </li>
      </ul>
    </section>
  );
}

type Row = { n: number; name: string; value: string; kind: "blue" | "edit" | "dim" | "group" };
const rows: Row[] = [
  { n: 1, name: "名称", value: "ZCT-1", kind: "blue" },
  { n: 2, name: "长度(mm)", value: "0", kind: "dim" },
  { n: 3, name: "宽度(mm)", value: "0", kind: "dim" },
  { n: 4, name: "高度(mm)", value: "0", kind: "dim" },
  { n: 5, name: "顶标高(m)", value: "层底标高", kind: "edit" },
  { n: 6, name: "底标高(m)", value: "层底标高", kind: "edit" },
  { n: 7, name: "备注", value: "", kind: "edit" },
  { n: 8, name: "钢筋业务属性", value: "", kind: "group" },
  { n: 16, name: "土建业务属性", value: "", kind: "group" },
  { n: 19, name: "显示样式", value: "", kind: "group" },
];

function PropertyPanel() {
  return (
    <section className="flex min-h-0 flex-1 flex-col border border-[#c2c4ca] bg-white">
      <PanelHead tabs={["属性列表", "图层管理"]} />
      <table className="w-full shrink-0 table-fixed border-collapse text-xs">
        <colgroup>
          <col className="w-[22px]" />
          <col className="w-[101px]" />
          <col />
          <col className="w-[35px]" />
        </colgroup>
        <thead>
          <tr className="h-5 border-b border-[#c2c4ca] bg-[#efefef] text-[#333]">
            <th className="bg-white p-0" />
            <th className="border-r border-[#c2c4ca] p-0 font-normal">属性名称</th>
            <th className="border-r border-[#c2c4ca] p-0 font-normal">属性值</th>
            <th className="p-0 font-normal">附加</th>
          </tr>
        </thead>
        <tbody>
          {rows.map((r) => (
            <tr key={r.n} className="h-[21px] border-b border-[#c2c4ca]">
              <td className="bg-[#efefef] p-0 text-center text-[#333]">{r.n}</td>
              <td className={r.kind === "blue" || r.kind === "dim" ? "border-x border-[#c2c4ca] p-0 pl-[2px] text-[#1a5cf5]" : "border-x border-[#c2c4ca] p-0 pl-[2px] text-black"}>
                {r.kind === "group" ? (
                  <button className="-ml-px flex items-center gap-[6px]">
                    <svg viewBox="0 0 14 14" className="size-[14px]" fill="none" aria-hidden="true">
                      <rect x=".5" y=".5" width="13" height="13" rx="1.500" stroke="#999" fill="#f6f6f6" />
                      <path d="M4 7.500h7M7.500 4v7" stroke="#222" />
                    </svg>
                    {r.name}
                  </button>
                ) : (
                  r.name
                )}
              </td>
              <td className={r.kind === "dim" || r.kind === "group" ? "border-r border-[#c2c4ca] bg-[#eaeaea] p-0 pl-[3px] text-[#888]" : "border-r border-[#c2c4ca] p-0 pl-[3px] text-black"}>{r.value}</td>
              <td className="p-0">
                {(r.kind === "blue" || r.kind === "edit") && (
                  <input type="checkbox" aria-label={`附加 ${r.name}`} className="mx-auto block size-[14px] appearance-none rounded-[2px] border border-[#888] bg-white checked:bg-[#57a5f7]" />
                )}
              </td>
            </tr>
          ))}
        </tbody>
      </table>
      <div className="w-[22px] flex-1 bg-[#efefef]" />
      <div className="flex h-[14px] shrink-0 items-center gap-1 px-px">
        <svg viewBox="0 0 4 8" className="h-2 w-1" aria-hidden="true"><path d="M4 0v8L0 4z" fill="#333" /></svg>
        <div className="mr-1 h-2 flex-1 rounded-full bg-[#cacaca]" />
        <svg viewBox="0 0 4 8" className="h-2 w-1" aria-hidden="true"><path d="M0 0v8l4-4z" fill="#333" /></svg>
      </div>
    </section>
  );
}

/* ---------- dialogs ---------- */

function TitleBar({ title, max }: { title: string; max?: boolean }) {
  return (
    <div className="flex h-[27px] shrink-0 items-center bg-[#2d80e2] pr-[10px] pl-2 text-xs text-white">
      <h2 className="mr-auto">{title}</h2>
      {max && (
        <button aria-label="最大化" className="mr-5">
          <svg viewBox="0 0 8 8" className="block size-2" fill="none" stroke="#fff" aria-hidden="true"><path d="M.5 1v6.500h7V1" /><path d="M0 1h8" strokeWidth="2" /></svg>
        </button>
      )}
      <button aria-label="关闭">
        <svg viewBox="0 0 8 8" className="block size-2" stroke="#fff" strokeWidth="1.500" aria-hidden="true"><path d="M.5.5l7 7M7.500.5l-7 7" /></svg>
      </button>
    </div>
  );
}

const radioClass =
  "block size-[14px] appearance-none rounded-full border border-[#8a8a8a] bg-white checked:bg-[radial-gradient(circle,#4a9bf5_3px,#ffffff_4px)]";

function ShapeDialog() {
  return (
    <div role="dialog" aria-label="选择参数化图形" className="absolute top-16 left-[5px] flex h-[576px] w-[958px] flex-col">
      <TitleBar title="选择参数化图形" max />
      <div className="flex min-h-0 flex-1 flex-col border border-t-0 border-[#c0c6d6] bg-[#efefef] px-[11px] pb-[43px]">
        <div className="flex h-[43px] shrink-0 items-center pt-[3px] text-xs text-black">
          <span className="w-[471px] pt-[2px]">截面类型：</span>
          <span className="w-[42px] pt-[2px]">单位：</span>
          <span className="mr-[7px] w-[22px] pt-[2px]">mm</span>
          <label className="mr-[7px] flex items-center gap-[7px]">
            <input type="radio" name="slope" defaultChecked className={radioClass} />
            角度放坡形式
          </label>
          <label className="flex items-center gap-[7px]">
            <input type="radio" name="slope" className={radioClass} />
            底宽放坡形式
          </label>
          <button className="ml-auto h-[26px] w-20 rounded-[3px] bg-[#2d80e2] text-white">配筋形式</button>
        </div>
        <div className="flex min-h-0 flex-1">
          <div className="flex border border-r-0 border-[#c2c4ca] bg-white">
            <div className="grid h-[459px] grid-cols-3 border-b border-[#c2c4ca]">
              {thumbs.map((t, i) => (
                <button
                  key={t.name}
                  aria-label={t.name}
                  className={
                    i === 0
                      ? "size-[153px] border-r border-b border-[#c2c4ca] p-[6px] ring-3 ring-[#2d80e2] ring-inset"
                      : "size-[153px] border-r border-b border-[#c2c4ca] p-[6px]"
                  }
                >
                  {t.art}
                </button>
              ))}
            </div>
            <div className="w-[11px] overflow-hidden pt-[13px] pl-[5px]">
              <div className="h-[300px] w-2 rounded-full bg-[#cacaca]" />
            </div>
          </div>
          <div className="flex-1 bg-black" />
        </div>
      </div>
    </div>
  );
}

function RebarDialog() {
  return (
    <div role="dialog" aria-label="配筋形式" className="absolute top-[239px] left-[476px] flex h-[578px] w-[702px] flex-col">
      <TitleBar title="配筋形式" />
      <div className="flex min-h-0 flex-1 flex-col border border-t-0 border-[#c0c6d6] bg-[#efefef] px-[11px] pt-[11px]">
        <div className="flex h-[496px] border border-[#85898f] bg-[#efefef]">
          <div className="grid flex-1 grid-cols-[315px_315px] content-start gap-2 pt-[5px] pl-[10px]">
            <button aria-label="全部翻起"><FlipUpSection /></button>
            <button aria-label="梁式配筋承台"><BeamSection /></button>
            <button aria-label="环式配筋承台" className="border-3 border-[#f00]"><RingSection /></button>
          </div>
          <div className="flex w-[17px] flex-col border-l border-[#c8c8c8]">
            <div className="flex h-[17px] items-center justify-center border-b border-[#c8c8c8] bg-white">
              <svg viewBox="0 0 9 5" className="h-[5px] w-[9px]" aria-hidden="true"><path d="M4.500 0L9 5H0z" fill="#666" /></svg>
            </div>
            <div className="flex-1 bg-[#e6e6e6]" />
            <div className="flex-1 border-y border-[#c8c8c8] bg-[#fafafa]" />
            <div className="flex h-[17px] items-center justify-center bg-white">
              <svg viewBox="0 0 9 5" className="h-[5px] w-[9px]" aria-hidden="true"><path d="M4.500 5L9 0H0z" fill="#666" /></svg>
            </div>
          </div>
        </div>
        <div className="flex justify-end gap-[6px] pt-[6px] text-xs">
          <button className="h-[26px] w-[78px] rounded-[3px] bg-[#2d80e2] pt-px text-white">确定</button>
          <button className="h-[26px] w-[78px] rounded-[3px] border border-[#c0c6d6] bg-[#fbfbfb] pt-px text-[#333]">取消</button>
        </div>
      </div>
    </div>
  );
}

function Axis() {
  return (
    <svg viewBox="0 0 60 60" className="absolute bottom-8 left-[35px] size-[60px]" fill="none" aria-hidden="true">
      <path d="M15 18v25" stroke="#0f0" strokeWidth="2" />
      <path d="M15 13l5 13H10z" fill="#0f0" />
      <path d="M15 42h20" stroke="#f00" strokeWidth="4" />
      <path d="M45 42l-12-5v10z" fill="#f00" />
      <circle cx="15" cy="43" r="5" fill="#0000b8" />
      <path d="M11 1l4 5 4-5M15 6v6" stroke="#0f0" />
      <path d="M47 37l8 11M55 37l-8 11" stroke="#f00" />
    </svg>
  );
}

export default function App() {
  return (
    <div className={`flex h-screen flex-col overflow-hidden bg-[#dcdde0] ${FONT}`}>
      <TopBar />
      <div className="flex min-h-0 flex-1 bg-white">
        <Sidebar />
        <div className="ml-1 flex w-[298px] shrink-0 flex-col gap-1">
          <ComponentPanel />
          <PropertyPanel />
        </div>
        <div className="w-1 shrink-0 pt-[372px]">
          <button aria-label="折叠面板" className="flex h-[100px] w-1 items-center bg-[#5b6773]">
            <svg viewBox="0 0 4 6" className="h-[6px] w-1" aria-hidden="true"><path d="M4 0v6L0 3z" fill="#ddd" /></svg>
          </button>
        </div>
        <main className="relative min-w-0 flex-1 overflow-hidden bg-black">
          <Axis />
          <ShapeDialog />
          <RebarDialog />
          <div className="pointer-events-none absolute top-[90px] left-[864px] h-[62px] w-[103px] border-3 border-[#fb3636]" />
        </main>
      </div>
      <div className="h-[3px] shrink-0" />
    </div>
  );
}
